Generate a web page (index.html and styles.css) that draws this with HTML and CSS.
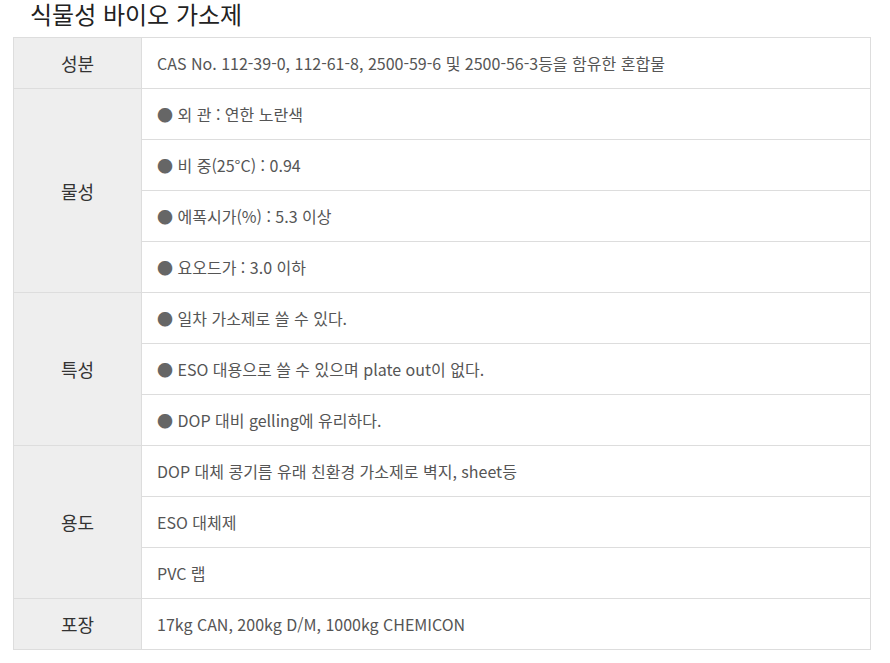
FILE: index.html
```html
<!DOCTYPE html>
<html lang="ko">
<head>
<meta charset="utf-8">
<link rel="stylesheet" href="styles.css">
</head>
<body>
<h2 class="title">식물성 바이오 가소제</h2>
<table class="spec">
  <colgroup><col class="c1"><col></colgroup>
  <tr><th>성분</th><td>CAS No. 112-39-0, 112-61-8, 2500-59-6 및 2500-56-3등을 함유한 혼합물</td></tr>
  <tr><th rowspan="4">물성</th><td><span class="dot">●</span> 외 관 : 연한 노란색</td></tr>
  <tr><td><span class="dot">●</span> 비 중(25°C) : 0.94</td></tr>
  <tr><td><span class="dot">●</span> 에폭시가(%) : 5.3 이상</td></tr>
  <tr><td><span class="dot">●</span> 요오드가 : 3.0 이하</td></tr>
  <tr><th rowspan="3">특성</th><td><span class="dot">●</span> 일차 가소제로 쓸 수 있다.</td></tr>
  <tr><td><span class="dot">●</span> ESO 대용으로 쓸 수 있으며 plate out이 없다.</td></tr>
  <tr><td><span class="dot">●</span> DOP 대비 gelling에 유리하다.</td></tr>
  <tr><th rowspan="3">용도</th><td>DOP 대체 콩기름 유래 친환경 가소제로 벽지, sheet등</td></tr>
  <tr><td>ESO 대체제</td></tr>
  <tr><td>PVC 랩</td></tr>
  <tr><th>포장</th><td>17kg CAN, 200kg D/M, 1000kg CHEMICON</td></tr>
</table>
</body>
</html>
```
FILE: styles.css
```css
html, body { margin: 0; padding: 0; background: #fff; }
body {
  font-family: "Noto Sans CJK KR", "Noto Sans", sans-serif;
  padding: 0 19px 0 13px;
}
.title {
  margin: 0;
  padding: 2px 0 0 17px;
  height: 35px;
  font-size: 24px;
  font-weight: 400;
  line-height: 24px;
  color: #222;
}
.spec {
  width: 858px;
  border-collapse: collapse;
  table-layout: fixed;
}
.spec col.c1 { width: 128px; }
.spec th, .spec td {
  border: 1px solid #ddd;
  height: 50px;
  padding: 0;
}
.spec th {
  background: #eee;
  font-size: 18px;
  font-weight: 400;
  color: #333;
  text-align: center;
}
.spec td {
  padding-left: 15px;
  font-size: 16px;
  color: #555;
  text-align: left;
}
.dot { color: #666; }
```
